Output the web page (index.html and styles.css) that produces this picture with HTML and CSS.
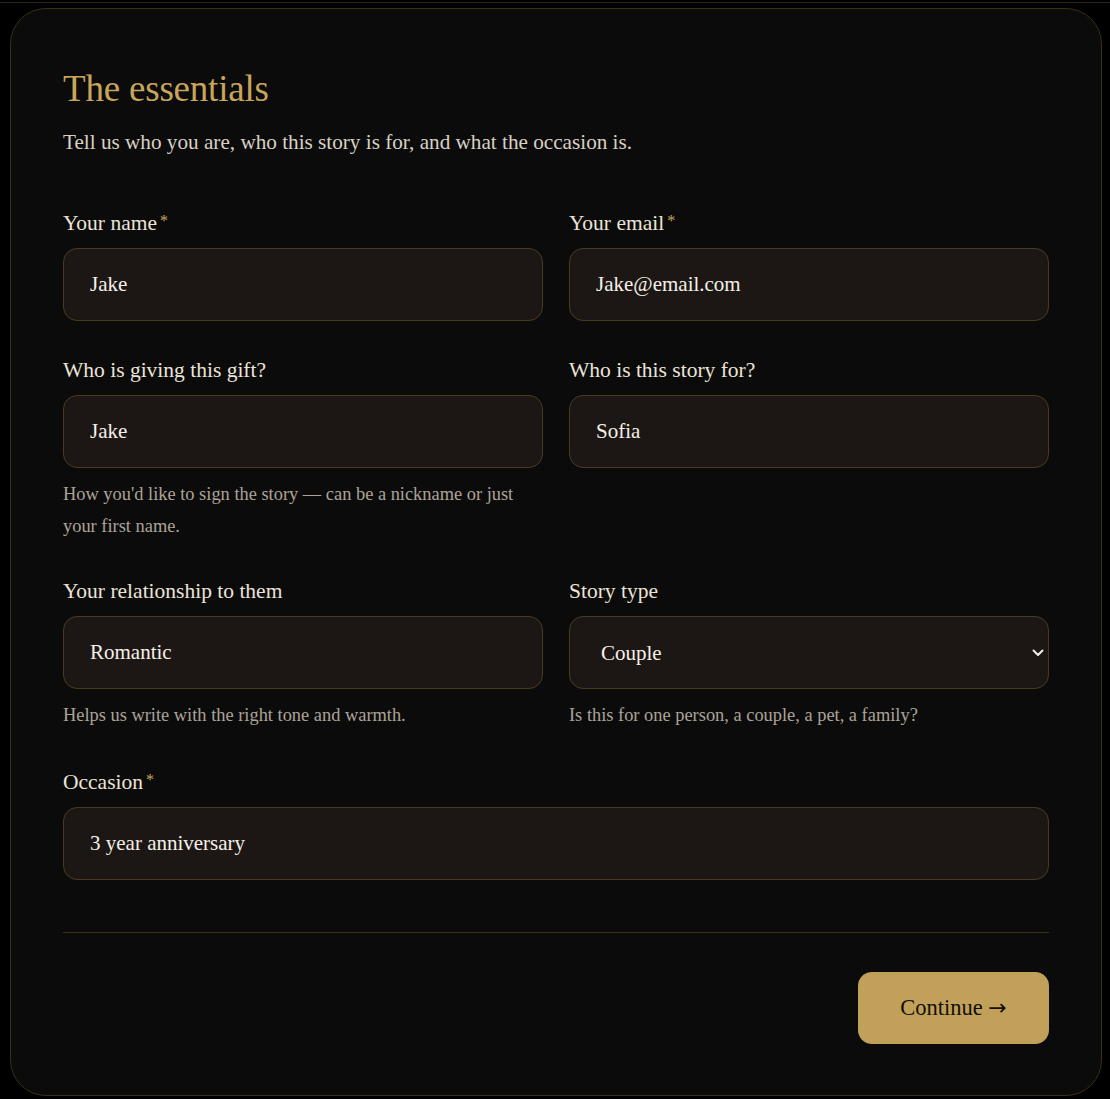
FILE: index.html
```html
<!DOCTYPE html>
<html lang="en">
<head>
<meta charset="utf-8">
<title>The essentials</title>
<link rel="stylesheet" href="styles.css">
</head>
<body>
<div class="topline"></div>
<main class="card">
  <h1 class="title">The essentials</h1>
  <p class="lead">Tell us who you are, who this story is for, and what the occasion is.</p>

  <form class="form">
    <div class="grid">
      <div class="field">
        <label class="label">Your name<span class="req">*</span></label>
        <input class="input" type="text" value="Jake">
      </div>
      <div class="field">
        <label class="label">Your email<span class="req">*</span></label>
        <input class="input" type="text" value="Jake@email.com">
      </div>

      <div class="field">
        <label class="label">Who is giving this gift?</label>
        <input class="input" type="text" value="Jake">
        <p class="help">How you'd like to sign the story — can be a nickname or just your first name.</p>
      </div>
      <div class="field">
        <label class="label">Who is this story for?</label>
        <input class="input" type="text" value="Sofia">
      </div>

      <div class="field">
        <label class="label">Your relationship to them</label>
        <input class="input" type="text" value="Romantic">
        <p class="help">Helps us write with the right tone and warmth.</p>
      </div>
      <div class="field">
        <label class="label">Story type</label>
        <div class="select-wrap">
          <select class="input select">
            <option>Couple</option>
          </select>
          <svg class="chev" width="12" height="8" viewBox="0 0 12 8"><path d="M1.5 1.5 L6 6 L10.5 1.5" fill="none" stroke="#f2ece4" stroke-width="2" stroke-linecap="round" stroke-linejoin="round"/></svg>
        </div>
        <p class="help">Is this for one person, a couple, a pet, a family?</p>
      </div>

      <div class="field full">
        <label class="label">Occasion<span class="req">*</span></label>
        <input class="input" type="text" value="3 year anniversary">
      </div>
    </div>

    <div class="footer">
      <button class="btn" type="button">Continue <span class="arrow">→</span></button>
    </div>
  </form>
</main>
</body>
</html>
```

FILE: styles.css
```css
html, body {
  margin: 0;
  padding: 0;
  background: #000;
}
body {
  font-family: "Liberation Serif", "Times New Roman", serif;
  color: #ece4d8;
  padding: 0 0 3px 10px;
}
.topline {
  height: 2px;
  border-bottom: 1px solid #2e2614;
  margin: 0 0 5px -10px;
}
.card {
  box-sizing: border-box;
  width: 1092px;
  background: #0b0b0b;
  border: 1px solid #3b2f17;
  border-radius: 36px;
  padding: 54px 52px 51px 52px;
  min-height: 1088px;
}
.title {
  margin: 0;
  font-weight: 400;
  font-size: 37px;
  line-height: 52px;
  color: #c9a55c;
  letter-spacing: -0.2px;
}
.lead {
  margin: 12px 0 0;
  font-size: 21.2px;
  line-height: 30px;
  color: #d9d1c5;
}
.form {
  margin-top: 50px;
}
.grid {
  display: grid;
  grid-template-columns: 1fr 1fr;
  column-gap: 26px;
  row-gap: 35px;
}
.field {
  display: flex;
  flex-direction: column;
  min-width: 0;
}
.full {
  grid-column: 1 / -1;
}
.label {
  font-size: 21.5px;
  line-height: 28px;
  color: #ece4d8;
  margin-bottom: 11px;
}
.req {
  color: #c9a55c;
  font-size: 16px;
  vertical-align: 4px;
  margin-left: 3px;
}
.input {
  box-sizing: border-box;
  width: 100%;
  height: 73px;
  background: #1c1714;
  border: 1px solid #4a3b1f;
  border-radius: 14px;
  padding: 0 26px;
  font-family: "Liberation Serif", "Times New Roman", serif;
  font-size: 21px;
  color: #f6f0e8;
  outline: none;
}
.select-wrap {
  position: relative;
}
.select {
  -webkit-appearance: none;
  appearance: none;
  padding-left: 31px;
  cursor: pointer;
}
.chev {
  position: absolute;
  right: 5px;
  top: 33px;
  pointer-events: none;
}
.help {
  margin: 10px 0 0;
  font-size: 18.4px;
  line-height: 32px;
  color: #aca398;
}
.footer {
  margin-top: 52px;
  border-top: 1px solid #3b2f17;
  padding-top: 39px;
  display: flex;
  justify-content: flex-end;
}
.btn {
  width: 191px;
  height: 72px;
  background: #c1a05a;
  border: none;
  border-radius: 14px;
  font-family: "Liberation Serif", "Times New Roman", serif;
  font-size: 22.5px;
  color: #120e07;
  cursor: pointer;
}
.arrow {
  font-family: "DejaVu Sans", sans-serif;
  font-size: 22px;
}
```
